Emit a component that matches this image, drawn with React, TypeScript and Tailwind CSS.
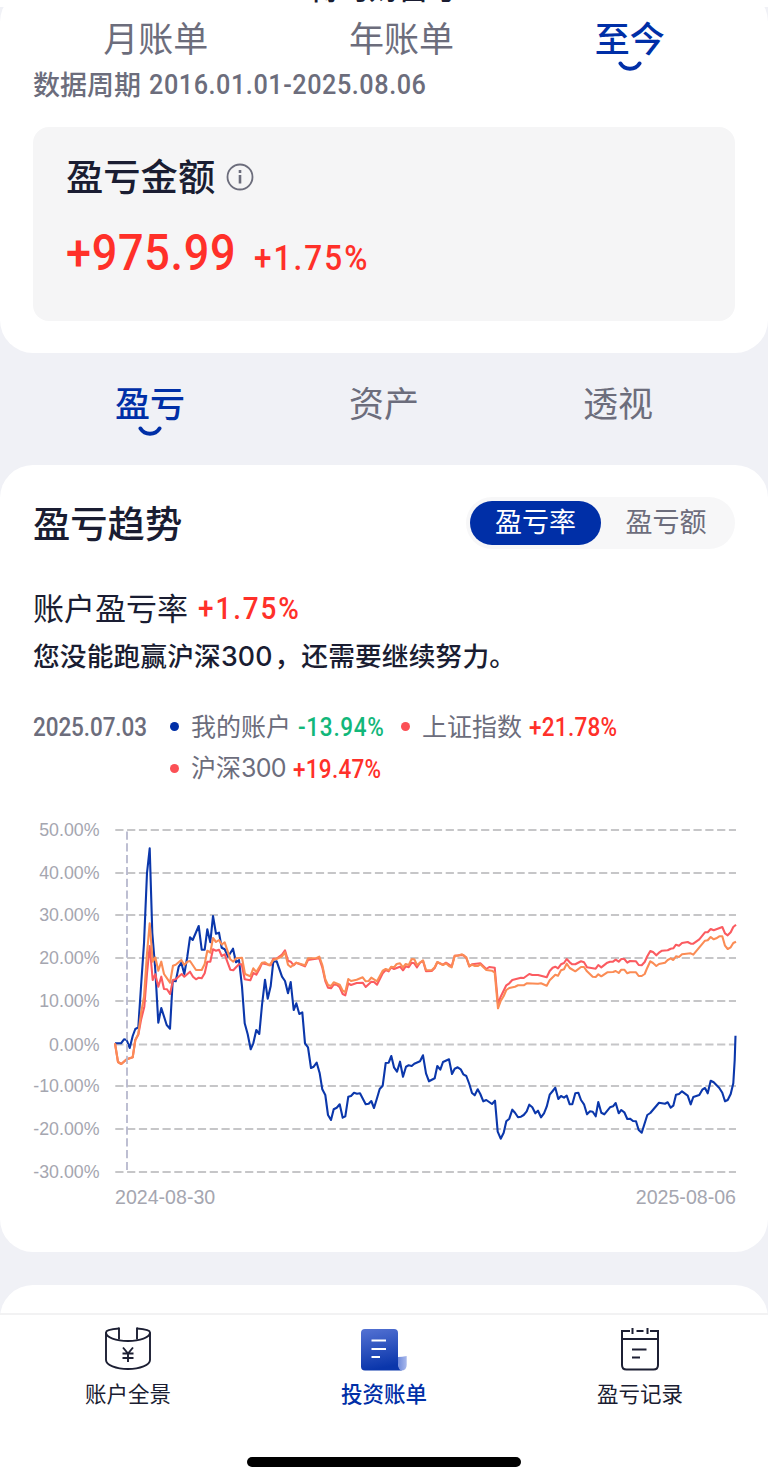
import clsx from "clsx";

const gridLines = [
  { label: "50.00%", y: 830 },
  { label: "40.00%", y: 873 },
  { label: "30.00%", y: 915 },
  { label: "20.00%", y: 958 },
  { label: "10.00%", y: 1001 },
  { label: "0.00%", y: 1044.5 },
  { label: "-10.00%", y: 1086 },
  { label: "-20.00%", y: 1129 },
  { label: "-30.00%", y: 1172 },
];

const accountLine =
  "115,1043.3 121,1043.3 124,1039.3 126.7,1040 129.7,1048 132.7,1036 135.3,1029 138.3,1027.3 141,986.7 144,943.3 147,873 149.7,848.3 152.3,933 155.3,970 158.3,1022.7 161.3,1008 166.7,1025 170,1028.7 172.7,980.7 175.7,981.3 178.7,966.7 181.3,962.7 184.3,974 187.3,956.7 190,937.3 192.7,940 198.7,926 201.7,949.7 204.7,949.7 207.3,929.3 210.3,942.3 213,916 216,933.7 219,932.7 221.7,947.7 224.7,949.3 228,956.7 233,948.7 236,962.3 239,960 242,986.7 244.7,1023.3 247.7,1034.3 250.7,1049.3 253.3,1043.3 256.3,1030 259.3,1034 262,1005 265,979.7 267.7,998.7 270.7,986 273.3,961.7 276.7,961.3 282,976.7 285,981 288,993.3 290.7,982 293.7,1010 296.3,1003.3 299.3,1014 302.3,1012.3 305,1043.3 308,1047.3 311,1068 313.7,1066.7 316.7,1062.7 319.7,1073.3 322.3,1089.3 325.3,1095 328,1115 331,1120 333.7,1109.3 336.7,1107.7 339.7,1104.3 342.7,1117.7 345.3,1116.3 348.3,1096.7 351,1096 354,1092.7 357,1093.7 360,1093.3 365.7,1104.3 368.7,1103.7 371.3,1101 374,1108 377,1098.3 379.7,1089 382.7,1085.7 385.7,1063 388.7,1062.7 391.3,1056 394,1067.3 397,1071.7 400,1061.7 403,1076.7 406,1066.7 408.7,1065.3 411.7,1066 414.3,1063.7 420,1061.3 423,1055.3 426,1073.3 429,1081.3 434.7,1078.3 437.3,1066 440.3,1069.7 443,1062 449,1059.3 452,1074 454.7,1068.7 457.7,1067.3 460.7,1069.3 463.3,1074.3 466.3,1076 469.3,1084 472,1093 474.7,1095.3 477.7,1089.3 480.3,1094 483.3,1101.3 486.3,1100 492,1104 495,1100.7 497.7,1131.7 500.7,1138.7 503.7,1132.7 506.3,1121.3 509.3,1118.7 512.3,1109.7 515,1112.7 518,1117.3 521,1116.7 523.7,1115 526.7,1111.3 529.3,1104.7 532.3,1107.3 535.3,1113.3 538,1110.7 541,1117.3 544,1113.3 546.7,1106.7 549.7,1094.7 552.7,1091 555.3,1087.7 558.3,1099 561,1096 564,1097.7 566.7,1095.7 569.7,1104.3 572.3,1104.3 575.3,1093.3 578.3,1092.7 581,1100 584,1104.3 587,1114.3 590,1111.3 592.7,1111.7 595.7,1116.3 598.3,1102 601.3,1112.7 604.3,1114.3 610,1107.3 613,1106.3 615.7,1103 618.7,1113.3 621.3,1110 624.3,1112.3 627.3,1119 630,1118.7 633,1121 636,1121.3 638.7,1130 641.7,1132.7 647.3,1115 650.3,1113 659,1102.7 665,1103.7 667.7,1102.3 670.7,1107.7 673.3,1105.7 676,1094.7 679,1094 682,1091.3 687.7,1095.7 690.7,1104.3 693.3,1097 699.3,1095 702.3,1089.7 705,1088 707.7,1093.3 710.7,1080.7 713.7,1082.3 719.3,1088 722.3,1092.7 725,1101.3 727.7,1100 730.7,1094 733.3,1083.3 734.7,1060 735.5,1035.7";

const shanghaiLine =
  "115,1043.3 118,1062 121.3,1064 126.7,1059.3 132.7,1057.3 135.3,1040 138.3,1034.7 141,1020 144.3,1006.7 147,973.3 149.7,946 152.7,980 155.3,974.3 158.3,986.7 161.3,976.7 164,989 167,989.3 170,994 173,980 175.7,979.3 181.7,974 184.3,976.7 190,971.7 193,976.7 196,979.3 198.7,977.7 201.7,978.3 204.7,973.3 207.3,961.7 210.3,961.7 213,949.3 216,950.7 219,949.7 221.7,956 224.7,954.3 227.3,961.7 230.3,969.7 233.3,970.3 236,967.3 239,964.3 241.7,964.3 244.7,979.3 250.3,980.3 253.3,973 256.3,974.7 259.3,969.3 262,963.3 270.7,965.3 273.3,958.7 276.7,958.7 282,954.7 285,950.3 288,960.7 290.7,961.7 293.7,965.3 296.3,962.7 305,966.3 308,960 319.3,958.3 322.3,967.3 325.3,981 328,987.7 331,988.3 333.7,984.7 336.7,984.7 339.7,987.3 342.7,994 345.3,995.3 348.3,983.3 351,985 356.7,983 362.7,982.7 365.7,987 371.3,981.7 374,982 377,984.7 382.7,973.3 385.7,970 388.7,971.3 391.3,967.3 394,969 400,966.7 403,970.3 405.7,966.3 408.7,967.3 411.7,962.7 414.3,963.3 417,967.3 420,962.7 423,961 426,971.3 431.7,971 434.7,968 437.3,962.3 443,964.7 446,962.7 451.7,966.3 454.7,955.7 463.3,955 466.3,958 469.3,966.3 472,964.3 480.3,963.3 486.3,969 489.3,967 494.7,967.7 498,1004 500.7,996.7 506.3,985.3 509.3,983.3 512.3,980 521,977.7 523.7,978 529.3,974 532.3,975 538,975 546.7,977.3 549.7,971 552.7,967.7 555.3,966.7 558,968.3 561,964.3 564,963 566.7,959 569.7,962.3 572.3,964.3 575.3,964.3 581,961.3 584,962.3 587,967.3 595.7,968.7 598.3,965 601.3,967.3 607.3,962.7 610,961.7 613,961.7 615.7,959.7 618.7,961.7 621.3,959 624.3,959 627.3,962.7 630,961 636,961.3 638.7,965 641.7,965.3 644.7,962 647.3,956.3 650.3,951 653,952 656.3,955.3 659,952.7 662,950.7 667.7,950.3 670.7,948.7 673.3,948.3 676,944.7 679,945.7 682,943 687.7,942 690.7,943.7 693.3,943.7 699.3,939.3 705,932.3 707.7,932.3 710.7,929 713.7,930.3 722.3,927 725,933.3 727.7,935.3 730.7,932.3 733.3,927 736,924.7";

const csiLine =
  "115,1043.3 118,1062 121.3,1064 126.7,1059.3 132.7,1057.3 135.3,1040 138.3,1034 141,1013.3 144,996.7 147,953.3 149.7,923.3 152.7,961.7 155.3,957.3 158.3,970.7 161.3,961.7 164,974 170,982.7 173,965.7 175.7,964.7 181.3,960 184.3,965 187.3,961.7 190,961 196,970 201.7,970 204.7,964 207.3,950.7 210.3,952.7 213,938 216,942 219,940 221.7,944.5 224.7,942.3 230.3,959.3 233.3,961.7 236,958.3 242,957.7 245,974 250.3,976.3 253.3,968.3 256.3,972 262,962.7 265,962.3 269.3,965.3 273.3,960 279.3,957.7 282,956.3 285,952.3 288,964.7 290.7,967 296.3,962.7 305,965.3 308,958.3 316.7,958 319.3,956.7 322.3,965 325.3,979.3 328,985 331,986 333.7,982.3 339.7,984.7 342.7,990.7 345.3,992 348.3,979 351,981 356.7,979.7 362.7,977.3 365.7,981.3 368.7,981 371.3,977.7 377,981.3 382.7,970.7 385.7,969 388.7,970.3 391.3,966.7 394,967.3 396.7,964 400,963.3 403,967.3 405.7,964 408.7,965 411.7,959 414.3,959.3 417,965 423,960.3 426,970 431.7,970.3 434.7,967.3 437.3,962 443,965 446,963.3 449,966 451.7,967.3 454.7,955.7 457.7,955.7 462,954.3 466.3,957.3 469.3,966.3 472,964.7 475,966 477.7,966 480.3,964.3 486.3,970 492,970.7 494.7,972.7 498,1008.3 500.7,1001 503.7,996 506.3,990 509.3,988 515,986.7 518,985.3 523.7,985.3 526.7,983.3 538,983.7 541,983.3 546.7,985.7 549.7,980.3 555.3,974.7 558,975.7 561,970.3 564,969.3 566.7,963.7 569.7,968 575.3,971.3 581,967 584,967 587,971.3 592.7,976.7 595.7,977 598.3,974.3 601.3,976.3 607.3,972.3 613,972 615.7,971 618.7,973 621.3,969.7 624.3,969.7 627.3,973.3 630,972.3 636,972.3 638.7,976 641.7,976 644.7,974 647.3,967.7 650.3,961.3 653,963 656.3,966 659,964 665,962.7 667.7,960 670.7,958.3 673.3,960 676,956.3 679,957 682,954.3 690.7,953.3 693.3,954.7 705,940.7 707.7,940.3 710.7,937 713.7,939.3 716.3,938.3 719.3,936.3 722.3,936.3 725,945.7 727.7,949 730.7,947.3 733.3,943 736,941.7";

function Smile() {
  return (
    <svg width="26" height="11" viewBox="0 0 26 11" className="mx-auto -mt-px block shrink-0">
      <path
        d="M3.5 2.5 C8 9.5 18 9.5 22.5 2.5"
        fill="none"
        stroke="#002fa7"
        strokeWidth="4"
        strokeLinecap="round"
      />
    </svg>
  );
}

function Tab({ label, active }: { label: string; active?: boolean }) {
  return (
    <button
      className={clsx(
        "flex flex-col text-center text-[35px] leading-[51px]",
        active ? "font-medium text-[#002fa7]" : "font-normal text-[#6c6d7c]"
      )}
    >
      {label}
      {active && <Smile />}
    </button>
  );
}

// condensed figures
function Num({ children, className }: { children: string; className?: string }) {
  return (
    <span
      className={clsx(
        "inline-block origin-left scale-x-90 font-['Roboto',sans-serif] font-medium whitespace-nowrap",
        className
      )}
    >
      {children}
    </span>
  );
}

function TrendChart() {
  return (
    <svg
      width="768"
      height="400"
      viewBox="0 815 768 400"
      className="block"
      fontFamily="'Liberation Sans', sans-serif"
      fill="#a5a6b0"
    >
      {gridLines.map((line) => (
        <g key={line.label}>
          <text x="99.5" y={line.y + 6} textAnchor="end" fontSize="17.8">
            {line.label}
          </text>
          <line
            x1="115.3"
            x2="736"
            y1={line.y}
            y2={line.y}
            stroke="#c6c6c8"
            strokeWidth="2"
            strokeDasharray="8.2 3.6"
          />
        </g>
      ))}
      <g fill="none" strokeWidth="2.1" strokeLinejoin="round">
        <polyline points={accountLine} stroke="#0b37ab" />
        <polyline points={shanghaiLine} stroke="#fb5b60" />
        <polyline points={csiLine} stroke="#fb8c55" />
      </g>
      <line
        x1="127"
        x2="127"
        y1="831.5"
        y2="1172"
        stroke="#b7b8ce"
        strokeWidth="1.8"
        strokeDasharray="8.2 3.6"
      />
      <text x="115" y="1204" fontSize="19.6">
        2024-08-30
      </text>
      <text x="736" y="1204" textAnchor="end" fontSize="19.6">
        2025-08-06
      </text>
    </svg>
  );
}

function AccountIcon() {
  return (
    <svg width="48" height="44" viewBox="0 0 48 44" fill="none" stroke="#1c1f33" strokeWidth="1.9">
      <path d="M2 5.5 V33 C2 38 12 42 24 42 C36 42 46 38 46 33 V5.5" />
      <path d="M15 1.5 C7 2 2 3.5 2 5.5 C2 10.5 12 14 24 14 C36 14 46 10.5 46 5.5 C46 3.5 41 2 33 1.5" />
      <path d="M15 .6 V12.5 M33 .6 V12.5" />
      <path d="M19 20.5 L24 26.5 L29 20.5 M18.5 26.5 H29.5 M18.5 31 H29.5 M24 26.5 V35" />
    </svg>
  );
}

function BillIcon() {
  return (
    <svg width="48" height="44" viewBox="0 0 48 44" className="mt-px">
      <defs>
        <linearGradient id="bill" x1="0" y1="0" x2="0.2" y2="1">
          <stop offset="0" stopColor="#5472d3" />
          <stop offset="1" stopColor="#0a36ab" />
        </linearGradient>
        <linearGradient id="curl" x1="0" y1="0" x2="1" y2="0">
          <stop offset="0" stopColor="#6f8adb" />
          <stop offset="1" stopColor="#a9b9ec" />
        </linearGradient>
      </defs>
      <path d="M5 1 H34 Q38 1 38 5 V35 Q38 40 42 42.5 H5 Q1 42.5 1 38.5 V5 Q1 1 5 1Z" fill="url(#bill)" />
      <path d="M38 29 Q42 29 46.7 28 V37 Q46.7 42.5 41 42.5 Q38 41 38 35Z" fill="url(#curl)" />
      <path d="M11.5 12.5 H26 M11.5 21 H26 M11.5 29 H20" stroke="#fff" strokeWidth="2.2" />
    </svg>
  );
}

function RecordIcon() {
  return (
    <svg width="48" height="46" viewBox="0 0 48 46" className="-mt-px" fill="none" stroke="#1c1f33" strokeWidth="2">
      <path d="M14 5 H6 V39 Q6 43.5 10.5 43.5 H37.5 Q42 43.5 42 39 V5 H34" />
      <path d="M6 13 H42 M16.5 2 V8 M31.5 2 V8 M20.5 5 H27.5" />
      <path d="M16 23.5 H30.5 M16 31.5 H24" />
    </svg>
  );
}

export default function App() {
  return (
    <div className="relative h-[1483px] w-[768px] overflow-hidden bg-[#f0f1f6] font-['Noto_Sans_CJK_SC',sans-serif] text-[#1a1d32]">
      {/* bottom edge of the page title */}
      <header className="relative z-10 flex h-[7px] items-start justify-center overflow-hidden bg-white">
        <span className="-mt-[30px] text-[29.5px] leading-[32px] font-medium">博时财富号</span>
      </header>

      {/* summary */}
      <section className="-mt-[18px] h-[364px] rounded-[33px] bg-white px-[33px] pt-[22px]">
        <div className="flex h-[54px] items-start justify-around">
          <Tab label="月账单" />
          <Tab label="年账单" />
          <Tab label="至今" active />
        </div>
        <p className="flex h-[38px] items-center text-[27px] font-medium text-[#6c6d7c]">
          数据周期
          <Num className="mt-[2px] ml-[8px] text-[28px] tracking-[0.62px]">2016.01.01-2025.08.06</Num>
        </p>

        <div className="mt-[24px] h-[194px] rounded-2xl bg-[#f5f5f6] px-[33px] pt-[21px]">
          <div className="flex items-center text-[37.3px] leading-[54px] font-medium">
            盈亏金额
            <svg width="28" height="28" viewBox="0 0 28 28" className="mt-[3px] ml-[11px]" fill="none" stroke="#6c6d7c">
              <circle cx="14" cy="14" r="12.5" strokeWidth="1.8" />
              <path d="M14 7 V10 M14 12 V20.5" strokeWidth="2.6" />
            </svg>
          </div>
          <div className="mt-[21px] flex items-baseline text-[#ff3029]">
            <Num className="w-[188px] text-[50px] leading-[60px] tracking-[0.8px]">+975.99</Num>
            <Num className="text-[35px] tracking-[2.3px]">+1.75%</Num>
          </div>
        </div>
      </section>

      <nav className="grid h-[112px] grid-cols-3 justify-items-center px-[33px] pt-[23px]">
        <Tab label="盈亏" active />
        <Tab label="资产" />
        <Tab label="透视" />
      </nav>

      {/* trend */}
      <section className="h-[787px] rounded-[33px] bg-white pt-[32px]">
        <div className="flex h-[54px] items-center justify-between px-[33px]">
          <h2 className="-mt-[3px] text-[37.3px] font-medium">盈亏趋势</h2>
          <div className="-mt-[2px] flex h-[52px] items-center rounded-full bg-[#f7f7f8] px-1 text-[27px]">
            <button className="h-[44px] w-[131px] rounded-full bg-[#002fa7] pb-[5px] leading-[39px] text-white">
              盈亏率
            </button>
            <button className="h-[44px] w-[130px] pb-[5px] leading-[39px] text-[#6c6d7c]">
              盈亏额
            </button>
          </div>
        </div>

        <div className="mt-[34px] flex h-[48px] items-center px-[33px] text-[31px]">
          <span className="-mt-[4px]">账户盈亏率</span>
          <Num className="ml-[10px] text-[31px] tracking-[2.1px] text-[#ff3029]">+1.75%</Num>
        </div>
        <p className="-mt-px px-[33px] text-[26.7px] leading-[46px] font-medium tracking-[0.15px]">
          您没能跑赢沪深
          <span className="mr-[2px] font-['Inter',sans-serif]">300</span>
          ，还需要继续努力。
        </p>

        <div className="mt-[27px] flex px-[33px] text-[25px] leading-[42px] text-[#6c6d7c]">
          <Num className="mt-px w-[137px] tracking-[-0.1px]">2025.07.03</Num>
          <div>
            <div className="flex items-center">
              <LegendItem dot="bg-[#002fa7]" name="我的账户" value="-13.94%" down />
              <LegendItem dot="bg-[#fb5055]" name="上证指数" value="+21.78%" />
            </div>
            <div className="flex items-center">
              <LegendItem dot="bg-[#fb5055]" name="沪深" digits="300" value="+19.47%" />
            </div>
          </div>
        </div>

        <div className="mt-[25px]">
          <TrendChart />
        </div>
      </section>

      <section className="mt-[33px] h-[60px] rounded-t-[33px] bg-white" />

      {/* tab bar */}
      <footer className="absolute inset-x-0 bottom-0 h-[170px] border-t-2 border-[#f2f2f3] bg-white">
        <div className="grid grid-cols-3 pt-[12px] text-[21.5px] leading-[30px]">
          <div className="flex flex-col items-center">
            <div className="h-[51px]">
              <AccountIcon />
            </div>
            账户全景
          </div>
          <div className="flex flex-col items-center font-medium text-[#002fa7]">
            <div className="h-[51px]">
              <BillIcon />
            </div>
            投资账单
          </div>
          <div className="flex flex-col items-center">
            <div className="h-[51px]">
              <RecordIcon />
            </div>
            盈亏记录
          </div>
        </div>
        <div className="mx-auto mt-[49px] h-[10px] w-[274px] rounded-full bg-black" />
      </footer>
    </div>
  );
}

function LegendItem({
  dot,
  name,
  digits,
  value,
  down,
}: {
  dot: string;
  name: string;
  digits?: string;
  value: string;
  down?: boolean;
}) {
  return (
    <div className="flex h-[42px] items-center">
      <span className={clsx("-mt-[2px] mr-[12px] size-[9px] rounded-full", dot)} />
      <span className="-mt-[4px]">
        {name}
        {digits && <span className="font-['Inter',sans-serif] tracking-[-0.7px]">{digits}</span>}
      </span>
      <Num
        className={clsx(
          "mt-[2px] ml-[7px] w-[103px] text-[25px]",
          down ? "tracking-[0.8px] text-[#12b77a]" : "tracking-[0.3px] text-[#ff3029]"
        )}
      >
        {value}
      </Num>
    </div>
  );
}
